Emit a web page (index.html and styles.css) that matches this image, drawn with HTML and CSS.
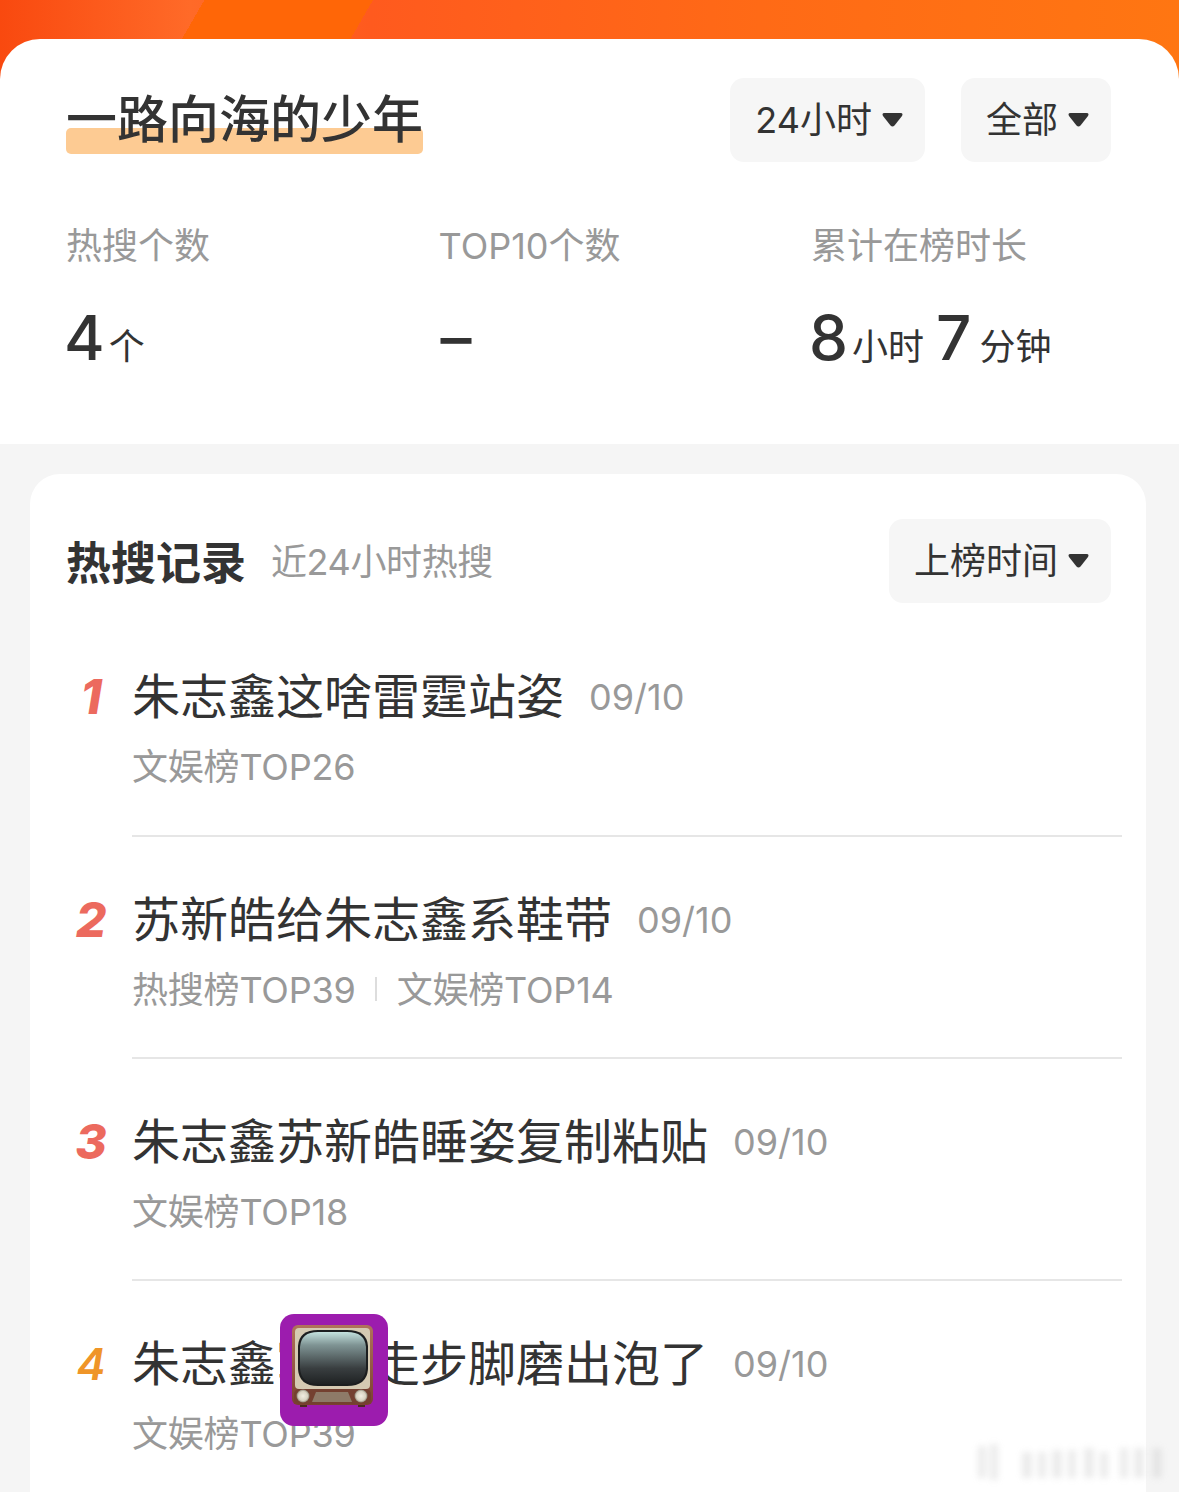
FILE: index.html
```html
<!DOCTYPE html>
<html lang="zh-CN">
<head>
  <meta charset="UTF-8" />
  <title>一路向海的少年</title>
  <link rel="stylesheet" href="styles.css">
</head>
<body>
  <div class="top">
    <div class="summary">
      <div class="summary-head">
        <h1 class="name"><span class="name-text">一路向海的少年</span></h1>
        <div class="filters">
          <div class="select">24小时<svg class="caret" width="21" height="14" viewBox="0 0 21 14"><path d="M2.5 0H18.5Q21.5 0 20 3L12.5 12.5Q10.5 14.5 8.5 12.5L1 3Q-.5 0 2.5 0Z"/></svg></div>
          <div class="select">全部<svg class="caret" width="21" height="14" viewBox="0 0 21 14"><path d="M2.5 0H18.5Q21.5 0 20 3L12.5 12.5Q10.5 14.5 8.5 12.5L1 3Q-.5 0 2.5 0Z"/></svg></div>
        </div>
      </div>
      <div class="stats">
        <div class="stat">
          <div class="stat-label">热搜个数</div>
          <div class="stat-value"><b>4</b><span>个</span></div>
        </div>
        <div class="stat">
          <div class="stat-label">TOP10个数</div>
          <div class="stat-value"><b class="dash">–</b></div>
        </div>
        <div class="stat">
          <div class="stat-label">累计在榜时长</div>
          <div class="stat-value"><b>8</b><span>小时</span><b class="gap">7</b><span>分钟</span></div>
        </div>
      </div>
    </div>
  </div>

  <div class="records">
    <div class="records-head">
      <h2 class="records-title">热搜记录</h2>
      <span class="records-note">近24小时热搜</span>
      <div class="select select-right">上榜时间<svg class="caret" width="21" height="14" viewBox="0 0 21 14"><path d="M2.5 0H18.5Q21.5 0 20 3L12.5 12.5Q10.5 14.5 8.5 12.5L1 3Q-.5 0 2.5 0Z"/></svg></div>
    </div>

    <div class="item">
      <div class="rank rank-one">1</div>
      <div class="item-body">
        <div class="item-title">朱志鑫这啥雷霆站姿<span class="item-date">09/10</span></div>
        <div class="item-tags"><span>文娱榜TOP26</span></div>
      </div>
    </div>
    <div class="item">
      <div class="rank">2</div>
      <div class="item-body">
        <div class="item-title">苏新皓给朱志鑫系鞋带<span class="item-date">09/10</span></div>
        <div class="item-tags"><span>热搜榜TOP39</span><i class="tag-sep"></i><span>文娱榜TOP14</span></div>
      </div>
    </div>
    <div class="item">
      <div class="rank">3</div>
      <div class="item-body">
        <div class="item-title">朱志鑫苏新皓睡姿复制粘贴<span class="item-date">09/10</span></div>
        <div class="item-tags"><span>文娱榜TOP18</span></div>
      </div>
    </div>
    <div class="item">
      <div class="rank rank-four">4</div>
      <div class="item-body">
        <div class="item-title">朱志鑫军训走步脚磨出泡了<span class="item-date">09/10</span></div>
        <div class="item-tags"><span>文娱榜TOP39</span></div>
      </div>
    </div>
  </div>

  <!-- sticker over the last row -->
  <div class="sticker">
    <svg width="108" height="112" viewBox="0 0 108 112">
      <defs>
        <linearGradient id="wood" x1="0" y1="0" x2="0" y2="1">
          <stop offset="0" stop-color="#b0735a"/>
          <stop offset="1" stop-color="#7a4030"/>
        </linearGradient>
        <linearGradient id="glass" x1="0" y1="0" x2="0" y2="1">
          <stop offset="0" stop-color="#c4e2de"/>
          <stop offset="0.25" stop-color="#7f9494"/>
          <stop offset="0.7" stop-color="#393e40"/>
          <stop offset="1" stop-color="#1f2223"/>
        </linearGradient>
        <radialGradient id="knob">
          <stop offset="0" stop-color="#f2eee2"/>
          <stop offset="0.7" stop-color="#d8d2c2"/>
          <stop offset="1" stop-color="#8d8676"/>
        </radialGradient>
      </defs>
      <rect x="12" y="11" width="81" height="80" rx="6" fill="url(#wood)"/>
      <rect x="15" y="14" width="75" height="61" rx="4" fill="#d5cab2"/>
      <path d="M38 16H67Q87 16 88 32V55Q87 72 67 72H38Q19 72 18 55V32Q19 16 38 16Z" fill="#1c1e1f"/>
      <path d="M38 18H67Q85 18 86 33V54Q85 70 67 70H38Q21 70 20 54V33Q21 18 38 18Z" fill="url(#glass)"/>
      <rect x="14" y="75" width="77" height="15" rx="5" fill="#744030"/>
      <path d="M32 88L36 78H68L72 88Z" fill="#8e7a68"/>
      <circle cx="23" cy="82" r="6.5" fill="url(#knob)"/>
      <circle cx="81" cy="82" r="6.5" fill="url(#knob)"/>
      <rect x="20" y="91" width="7" height="2" fill="#4a2a20"/>
      <rect x="78" y="91" width="7" height="2" fill="#4a2a20"/>
    </svg>
  </div>

  <!-- blurred watermark, bottom right -->
  <div class="watermark">
    <svg width="204" height="44" viewBox="0 0 204 44">
      <g fill="#c8c8c8">
        <rect x="8" y="6" width="8" height="32"/>
        <rect x="20" y="4" width="8" height="36"/>
        <rect x="52" y="12" width="10" height="26"/>
        <rect x="68" y="12" width="8" height="26"/>
        <rect x="82" y="10" width="10" height="28"/>
        <rect x="98" y="10" width="8" height="28"/>
        <rect x="114" y="8" width="10" height="30"/>
        <rect x="130" y="12" width="8" height="26"/>
        <rect x="150" y="8" width="8" height="30"/>
        <rect x="164" y="8" width="10" height="30"/>
        <rect x="182" y="8" width="10" height="30"/>
      </g>
    </svg>
  </div>
</body>
</html>
```
FILE: styles.css
```css
* {
  box-sizing: border-box;
}
html,
body {
  margin: 0;
  height: 1492px;
  overflow: hidden;
}
body {
  position: relative;
  background: #f5f5f5;
  color: #333;
  font-family: "Inter", "Noto Sans CJK SC", sans-serif;
}
.top {
  padding-top: 39px;
  background:
    linear-gradient(120deg, transparent 0, transparent 177px, #ff6607 177px, #ff6607 323px, transparent 323px),
    linear-gradient(90deg, #f9490f 0, #ff6a28 190px, #ff5a1e 370px, #ff6a16 760px, #ff7612 100%);
}
.summary {
  height: 405px;
  padding: 39px 68px 0 66px;
  background: #fff;
  border-radius: 40px 40px 0 0;
}
.summary-head {
  display: flex;
  justify-content: space-between;
  align-items: flex-start;
}
.name {
  margin: 0;
  font-size: 51px;
  line-height: 84px;
  font-weight: 500;
}
.name-text {
  position: relative;
  z-index: 0;
  display: inline-block;
}
.name-text::after {
  content: "";
  position: absolute;
  z-index: -1;
  left: 0;
  right: 0;
  top: 50px;
  height: 26px;
  background: #fdcb93;
  border-radius: 5px;
}
.filters {
  display: flex;
  gap: 36px;
}
.select {
  display: flex;
  align-items: center;
  height: 84px;
  padding: 0 22px 6px 25px;
  background: #f6f6f6;
  border-radius: 14px;
  font-size: 36px;
  white-space: nowrap;
}
.caret {
  margin: 6px 0 0 10px;
  fill: #333;
}
.stats {
  display: grid;
  grid-template-columns: 372.5px 372.5px 1fr;
  margin-top: 57px;
}
.stat-label {
  font-size: 36px;
  line-height: 54px;
  color: #999;
}
.stat-value {
  display: flex;
  align-items: baseline;
  margin-top: 25px;
  height: 80px;
  font-size: 36px;
}
.stat-value b {
  font-size: 62px;
  font-weight: 500;
  line-height: 80px;
  margin-right: 4px;
  margin-left: -2px;
}
.stat-value b.dash {
  margin-left: 2px;
}
.stat-value b.gap {
  margin-left: 12px;
  margin-right: 8px;
}
.records {
  height: 1018px;
  margin: 30px 33px 0 30px;
  padding-top: 45px;
  background: #fff;
  border-radius: 30px 30px 0 0;
}
.records-head {
  display: flex;
  align-items: center;
  height: 84px;
  padding: 0 35px 0 36px;
}
.records-title {
  margin: 0;
  padding-top: 6px;
  font-size: 45px;
  font-weight: 700;
  line-height: 84px;
}
.records-note {
  margin-left: 25px;
  padding-bottom: 4px;
  font-size: 36px;
  letter-spacing: -0.4px;
  color: #999;
}
.select-right {
  margin-left: auto;
}
.item {
  display: flex;
  height: 222px;
  padding-right: 24px;
}
.records-head + .item {
  height: 234px;
}
.records-head + .item .item-body {
  padding-top: 58px;
}
.rank {
  width: 102px;
  padding: 53px 0 0 20px;
  text-align: center;
  font-size: 48px;
  font-weight: 800;
  font-style: italic;
  line-height: 60px;
  color: #ec6a5e;
}
.records-head + .item .rank {
  padding-top: 64px;
}
.rank-four {
  font-size: 44px;
  font-weight: 600;
  color: #ef9528;
}
.item-body {
  flex: 1;
  padding-top: 47px;
  border-bottom: 2px solid #e6e6e6;
}
.item-title {
  display: flex;
  align-items: center;
  height: 64px;
  font-size: 48px;
  white-space: nowrap;
}
.item-date {
  margin: 7px 0 0 25px;
  font-size: 36px;
  color: #999;
}
.item-tags {
  display: flex;
  align-items: center;
  height: 54px;
  margin-top: 12px;
  font-size: 36px;
  letter-spacing: -0.2px;
  color: #999;
}
.tag-sep {
  width: 2px;
  height: 24px;
  margin: 4px 20px 0 19px;
  background: #ddd;
}
.sticker {
  position: absolute;
  left: 280px;
  top: 1314px;
  width: 108px;
  height: 112px;
  background: #9c1cae;
  border-radius: 14px;
}
.sticker svg {
  display: block;
}
.watermark {
  position: absolute;
  left: 970px;
  top: 1440px;
  filter: blur(3px);
  opacity: 0.35;
}
```
